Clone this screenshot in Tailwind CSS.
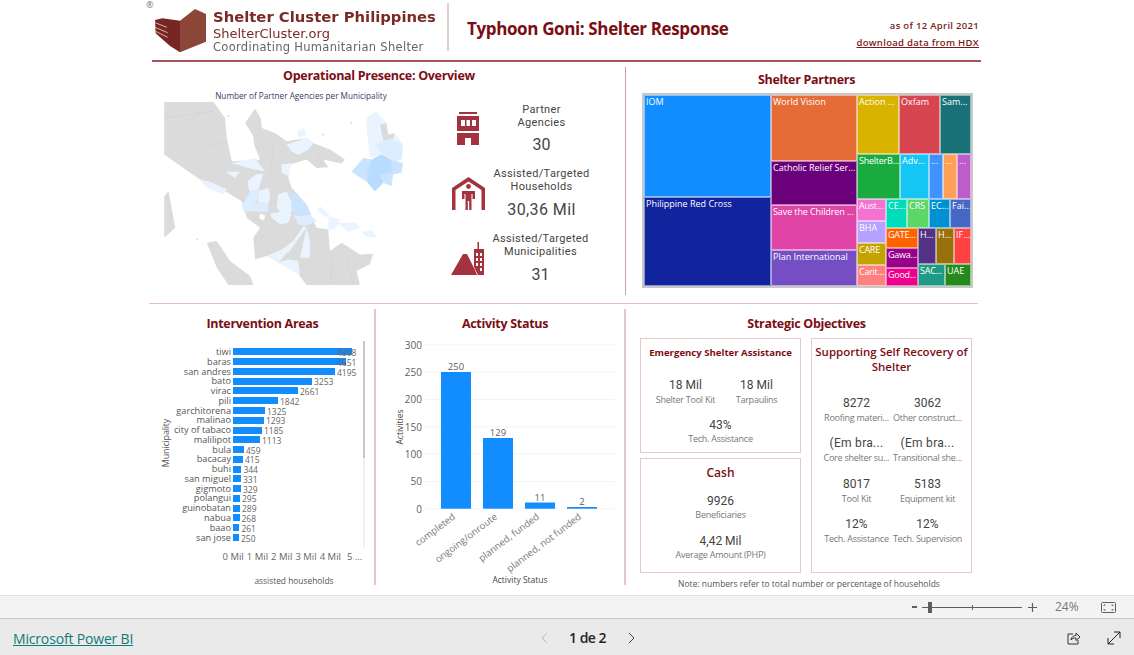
<!DOCTYPE html>
<html lang="en">
<head>
    <meta charset="UTF-8">
    <meta name="viewport" content="width=device-width, initial-scale=1.0">
    <title>Typhoon Goni: Shelter Response</title>
    <script src="https://cdn.jsdelivr.net/npm/@tailwindcss/browser@4"></script>
</head>
<body class="bg-white flex flex-col h-screen w-[1134px] overflow-hidden font-['Open_Sans',sans-serif]">
    <!-- report canvas -->
    <main class="h-[595px] shrink-0">
        <div class="w-[840px] ml-[146px]">
            <!-- header -->
            <header class="relative flex h-[60px]">
                <span class="absolute left-[0px] top-[-1px] text-[9px] leading-[12px] text-gray-500">®</span>
                <svg class="ml-[9px] mt-[9px] w-[51px] h-[44px] shrink-0 blur-[0.3px]" viewBox="30 27 153 132">
                    <path d="M105 62 L150 27 L183 42 L183 125 L105 157 Z" fill="#8c4638"/>
                    <path d="M30 60 L52 55 L105 62 L105 157 L75 138 L32 100 Z" fill="#772624"/>
                    <path d="M30 68 L66 82 M30 82 L68 98 M32 94 L68 112" stroke="#e8cfc8" stroke-width="2.5" fill="none"/>
                </svg>
                <div class="ml-[7px] w-[230px] font-['DejaVu_Sans',sans-serif] shrink-0 blur-[0.2px]">
                    <p class="mt-[8px] text-[14.8px] leading-[18px] font-bold text-[#7a2a26] whitespace-nowrap">Shelter Cluster Philippines</p>
                    <p class="text-[13px] leading-[15px] text-[#7a2a26] whitespace-nowrap">ShelterCluster.org</p>
                    <p class="-mt-[1px] text-[11.5px] leading-[14px] tracking-[0.3px] text-[#666] whitespace-nowrap">Coordinating Humanitarian Shelter</p>
                </div>
                <div class="ml-[4px] mt-[3px] w-[2px] h-[48px] bg-[#e3cccc] shrink-0"></div>
                <h1 class="ml-[18px] mt-[17px] w-[330px] text-[17px] leading-[24px] font-bold tracking-[-0.37px] text-[#7b0e14] whitespace-nowrap">Typhoon Goni: Shelter Response</h1>
                <div class="w-[182px] mt-[19px] text-right text-[9.5px] font-semibold tracking-[0.3px] text-[#7b1a1a] whitespace-nowrap">
                    <p class="leading-[14px]">as of 12 April 2021</p>
                    <p class="mt-[3px] leading-[14px] underline">download data from HDX</p>
                </div>
            </header>
            <div class="ml-[6px] w-[829px] h-[2px] bg-[#ab5258]"></div>

            <!-- top row -->
            <section class="flex mt-[5px] h-[228px]">
                <div class="w-[480px] border-r border-r-[#c9a0a3] shrink-0">
                    <h2 class="mt-[1px] text-center w-[466px] text-[12.5px] leading-[16px] font-bold tracking-[-0.3px] text-[#7b0e14]">Operational Presence: Overview</h2>
                    <div class="flex">
                        <div class="ml-[14px] w-[250px] shrink-0">
                            <p class="mt-[7px] h-[10px] pl-[32px] text-center text-[8.2px] leading-[10px] text-[#403a66] whitespace-nowrap">Number of Partner Agencies per Municipality</p>
                            <svg class="mt-[1px] w-[250px] h-[183px] blur-[0.4px]" viewBox="0 22 750 550">
                                <g fill="#dcdbdb">
                                    <path d="M12 22 L160 22 L195 70 L200 130 L215 200 L300 195 L282 150 L280 125 L255 85 L285 42 L302 70 L305 100 L345 115 L380 140 L440 130 L460 145 L510 165 L555 195 L545 207 L490 195 L505 218 L470 220 L440 195 L390 210 L385 250 L395 280 L440 330 L470 400 L505 405 L510 470 L545 445 L600 480 L640 478 L630 510 L590 530 L600 572 L440 572 L415 540 L370 510 L320 485 L285 495 L280 430 L300 400 L260 370 L245 320 L195 290 L120 255 L90 235 L12 180 Z"/>
                                    <path d="M12 305 L25 290 L45 400 L12 430 Z"/>
                                    <path d="M140 445 L170 440 L210 500 L270 545 L280 572 L205 572 L170 520 Z"/>
                                    <path d="M660 90 L680 85 L685 120 L705 115 L700 140 L670 140 Z"/>
                                    <circle cx="205" cy="65" r="3"/><circle cx="490" cy="120" r="3"/><circle cx="110" cy="435" r="3"/><circle cx="575" cy="85" r="3"/>
                                </g>
                                <path d="M12 70 L160 50 M60 120 L140 30 M90 180 L190 140 M150 190 L200 240 M340 150 L330 260 M470 170 L490 215 M300 430 L370 380 M520 480 L510 570 M560 490 L580 570" stroke="#d2d1d1" stroke-width="2" fill="none"/>
                                <path d="M300 358 L315 362 L312 378 L298 372 Z" fill="#fff"/>
                                <g fill="#eaf4ff">
                                    <path d="M620 70 L650 50 L680 85 L660 90 L670 140 L700 140 L705 115 L730 150 L725 195 L700 205 L670 180 L630 190 L620 100 Z"/>
                                    <path d="M380 150 L440 130 L460 145 L445 165 L415 182 L395 170 Z"/>
                                    <path d="M412 110 L430 100 L440 120 L415 130 Z"/>
                                    <path d="M215 205 L285 190 L315 230 L270 222 Z"/>
                                    <path d="M195 232 L240 232 L225 250 Z"/>
                                    <path d="M365 210 L395 205 L385 245 L365 235 Z"/>
                                    <path d="M262 260 L290 238 L310 238 L295 285 L268 290 Z"/>
                                    <path d="M118 255 L150 262 L200 285 L190 300 L140 280 Z"/>
                                    <path d="M295 290 L325 280 L330 310 L325 325 L295 325 Z"/>
                                    <path d="M355 300 L380 290 L395 325 L395 355 L365 358 L350 340 Z"/>
                                    <path d="M330 358 L360 352 L395 358 L385 385 L360 390 L335 370 Z"/>
                                    <path d="M480 335 L510 360 L495 370 L472 345 Z"/>
                                    <path d="M505 365 L540 375 L525 405 L505 405 Z"/>
                                    <path d="M530 385 L590 385 L600 400 L565 412 Z"/>
                                    <path d="M605 412 L640 408 L650 430 L615 425 Z"/>
                                    <path d="M430 395 L400 440 L365 465 L385 475 L440 400 Z"/>
                                    <path d="M365 465 L320 485 L355 505 L385 470 Z"/>
                                    <path d="M440 400 L450 440 L450 490 L420 490 Z"/>
                                    <path d="M350 505 L385 495 L415 500 L420 545 L375 515 Z"/>
                                </g>
                                <g fill="#dcedff">
                                    <path d="M245 335 L270 290 L300 285 L290 320 L275 350 L250 352 Z"/>
                                    <path d="M275 350 L290 325 L325 325 L325 352 L290 352 Z"/>
                                    <path d="M400 360 L420 365 L450 360 L470 380 L435 395 L415 390 Z"/>
                                    <path d="M645 150 L695 130 L730 150 L725 195 L700 205 L670 180 Z"/>
                                </g>
                                <g fill="#c9e4ff">
                                    <path d="M382 290 L410 300 L445 340 L450 355 L420 365 L395 345 L395 310 Z"/>
                                    <path d="M575 232 L610 190 L635 195 L665 180 L695 197 L730 205 L725 235 L700 240 L695 275 L670 265 L645 290 L620 262 Z"/>
                                </g>
                                <g fill="#b8dcff">
                                    <path d="M635 195 L665 180 L695 197 L695 235 L650 240 L625 225 Z"/>
                                    <path d="M622 228 L660 240 L670 265 L645 290 L625 265 Z"/>
                                </g>
                            </svg>
                        </div>
                        <!-- KPIs -->
                        <div class="ml-[35px] mt-[17px] w-[150px] text-[#444] font-['Roboto',sans-serif]">
                            <div class="flex h-[65px]">
                                <svg class="ml-[11px] mt-[11px] w-[25px] h-[33px] shrink-0" viewBox="0 0 25 33" fill="#a4333f">
                                    <path d="M3 0 H21 V2 H3 Z"/>
                                    <path fill-rule="evenodd" d="M1 4 H23 V19 H1 Z M5 8 V14 H9 V8 Z M10.5 8 V14 H14 V8 Z M16 8 V14 H20 V8 Z"/>
                                    <path d="M1 21 H23 V33 H15 V26 H9 V33 H1 Z"/>
                                </svg>
                                <div class="ml-[9px] w-[103px] text-center">
                                    <p class="mt-[2px] text-[11px] leading-[13px] tracking-[0.35px]">Partner<br>Agencies</p>
                                    <p class="mt-[5px] text-[16px] leading-[22px]">30</p>
                                </div>
                            </div>
                            <div class="flex h-[65px]">
                                <svg class="ml-[7px] mt-[11px] w-[33px] h-[33px] shrink-0" viewBox="0 0 33 33" fill="#a4333f">
                                    <path d="M0 11 L16.5 0 L33 11 V33 H29.5 V13 L16.5 4.5 L3.5 13 V33 H0 Z"/>
                                    <circle cx="16.5" cy="9.5" r="2.4"/>
                                    <path d="M10 14 H23 V22 H20.5 V17 H19.5 V33 H17.2 V24 H15.8 V33 H13.5 V17 H12.5 V22 H10 Z"/>
                                </svg>
                                <div class="ml-[5px] w-[103px] text-center">
                                    <p class="mt-[1px] text-[11px] leading-[13px] tracking-[0.35px] whitespace-nowrap">Assisted/Targeted<br>Households</p>
                                    <p class="mt-[6px] text-[16px] leading-[22px] tracking-[0.4px]">30,36 Mil</p>
                                </div>
                            </div>
                            <div class="flex h-[65px]">
                                <svg class="ml-[6px] mt-[11px] w-[34px] h-[33px] shrink-0" viewBox="0 0 34 33" fill="#a4333f">
                                    <path d="M0 33 L12 12 L16 12 L24 28 L26 33 Z"/>
                                    <path fill-rule="evenodd" d="M26.5 0 H28 V7 H33 V33 H27 L23 25 V7 H26.5 Z M25 11 V14 H27 V11 Z M29 11 V14 H31 V11 Z M25 16 V19 H27 V16 Z M29 16 V19 H31 V16 Z M25 21 V24 H27 V21 Z M29 21 V24 H31 V21 Z M29 26 V29 H31 V26 Z"/>
                                </svg>
                                <div class="ml-[4px] w-[103px] text-center">
                                    <p class="mt-[1px] text-[11px] leading-[13px] tracking-[0.35px] whitespace-nowrap">Assisted/Targeted<br>Municipalities</p>
                                    <p class="mt-[6px] text-[16px] leading-[22px]">31</p>
                                </div>
                            </div>
                        </div>
                    </div>
                </div>

                <!-- treemap -->
                <div class="pl-[16px]">
                    <h2 class="mt-[5px] w-[329px] text-center text-[12.5px] leading-[16px] font-bold tracking-[-0.3px] text-[#7b0e14]">Shelter Partners</h2>
                    <div class="mt-[5px] flex w-[331px] h-[195px] border-2 border-[#c8c8c8] text-[9px] leading-[12px] text-white whitespace-nowrap overflow-hidden">
                        <div class="flex flex-col w-[127px] shrink-0">
                            <div class="h-[102px] px-[1px] bg-[#118dff] border border-white/50">IOM</div>
                            <div class="flex-1 px-[1px] bg-[#12239e] border border-white/50">Philippine Red Cross</div>
                        </div>
                        <div class="flex flex-col w-[86px] shrink-0">
                            <div class="h-[66px] px-[1px] bg-[#e66c37] border border-white/50">World Vision</div>
                            <div class="h-[44px] px-[1px] bg-[#6b007b] border border-white/50 overflow-hidden">Catholic Relief Ser...</div>
                            <div class="h-[45px] px-[1px] bg-[#e044a7] border border-white/50 overflow-hidden tracking-[-0.1px]">Save the Children ...</div>
                            <div class="flex-1 px-[1px] bg-[#744ec2] border border-white/50">Plan International</div>
                        </div>
                        <div class="flex flex-col w-[114px] shrink-0">
                            <div class="flex h-[59px]">
                                <div class="w-[42px] shrink-0 overflow-hidden px-[1px] bg-[#d9b300] border border-white/50">Action ...</div>
                                <div class="w-[41px] shrink-0 overflow-hidden px-[1px] bg-[#d64550] border border-white/50">Oxfam</div>
                                <div class="w-[31px] shrink-0 overflow-hidden px-[1px] bg-[#197278] border border-white/50">Sam...</div>
                            </div>
                            <div class="flex h-[45px]">
                                <div class="w-[43px] shrink-0 overflow-hidden px-[1px] tracking-[-0.25px] bg-[#1aab40] border border-white/50">ShelterB...</div>
                                <div class="w-[29px] shrink-0 overflow-hidden px-[1px] bg-[#15c6f4] border border-white/50">Adv...</div>
                                <div class="w-[14px] shrink-0 overflow-hidden px-[1px] bg-[#4092ff] border border-white/50">...</div>
                                <div class="w-[14px] shrink-0 overflow-hidden px-[1px] bg-[#ffa058] border border-white/50">...</div>
                                <div class="w-[14px] shrink-0 overflow-hidden px-[1px] bg-[#be5dc9] border border-white/50">...</div>
                            </div>
                            <div class="flex flex-1">
                                <div class="flex flex-col w-[29px] shrink-0">
                                    <div class="h-[22px] overflow-hidden px-[1px] tracking-[-0.25px] bg-[#f472d0] border border-white/50">Aust...</div>
                                    <div class="h-[22px] overflow-hidden px-[1px] bg-[#b5a1ff] border border-white/50">BHA</div>
                                    <div class="h-[22px] overflow-hidden px-[1px] tracking-[-0.25px] bg-[#c4a200] border border-white/50">CARE</div>
                                    <div class="flex-1 overflow-hidden px-[1px] tracking-[-0.25px] bg-[#ff8080] border border-white/50">Carit...</div>
                                </div>
                                <div class="flex flex-col w-[85px] shrink-0">
                                    <div class="flex h-[29px]">
                                        <div class="w-[21px] shrink-0 overflow-hidden px-[1px] bg-[#00dbbc] border border-white/50">CE...</div>
                                        <div class="w-[22px] shrink-0 overflow-hidden px-[1px] bg-[#5bd667] border border-white/50">CRS</div>
                                        <div class="w-[21px] shrink-0 overflow-hidden px-[1px] bg-[#0091d5] border border-white/50">EC...</div>
                                        <div class="w-[21px] shrink-0 overflow-hidden px-[1px] bg-[#4668c5] border border-white/50">Fai...</div>
                                    </div>
                                    <div class="flex flex-1">
                                        <div class="flex flex-col w-[32px] shrink-0">
                                            <div class="h-[20px] overflow-hidden px-[1px] tracking-[-0.25px] bg-[#ff6300] border border-white/50">GATE...</div>
                                            <div class="h-[20px] overflow-hidden px-[1px] tracking-[-0.25px] bg-[#99008a] border border-white/50">Gawa...</div>
                                            <div class="flex-1 overflow-hidden px-[1px] tracking-[-0.25px] bg-[#ec008c] border border-white/50">Good...</div>
                                        </div>
                                        <div class="flex flex-col w-[53px] shrink-0">
                                            <div class="flex h-[36px]">
                                                <div class="w-[18px] shrink-0 overflow-hidden px-[1px] bg-[#533285] border border-white/50">H...</div>
                                                <div class="w-[18px] shrink-0 overflow-hidden px-[1px] bg-[#99700a] border border-white/50">H...</div>
                                                <div class="w-[17px] shrink-0 overflow-hidden px-[1px] bg-[#ff4141] border border-white/50">IF...</div>
                                            </div>
                                            <div class="flex flex-1">
                                                <div class="w-[27px] shrink-0 overflow-hidden px-[1px] tracking-[-0.25px] bg-[#1f9a85] border border-white/50">SAC...</div>
                                                <div class="w-[26px] shrink-0 overflow-hidden px-[1px] bg-[#25891c] border border-white/50">UAE</div>
                                            </div>
                                        </div>
                                    </div>
                                </div>
                            </div>
                        </div>
                    </div>
                </div>
            </section>

            <div class="mt-[8px] ml-[3px] w-[829px] h-[1px] bg-[#e3bfc1]"></div>

            <!-- bottom row -->
            <section class="flex mt-[5px] h-[276px]">
                <!-- intervention areas -->
                <div class="relative w-[230px] border-r-2 border-r-[#e6c5c8] shrink-0 text-[#555]">
                    <h2 class="mt-[7px] pl-[3px] text-center w-[230px] text-[12.5px] leading-[16px] font-bold tracking-[-0.3px] text-[#7b0e14]">Intervention Areas</h2>
                    <span class="absolute left-[-4px] top-[129px] -rotate-90 text-[9px] leading-[10px] tracking-[-0.2px]">Municipality</span>
                    <div class="absolute left-[217px] top-[32px] w-[2px] h-[207px] bg-[#f0f0f0]">
                        <div class="w-[2px] h-[117px] bg-[#c8c8c8]"></div>
                    </div>
                    <div class="mt-[15px] text-[9.2px] leading-[9.77px] whitespace-nowrap">
                        <div class="flex items-center h-[9.77px]"><span class="w-[85px] text-right">tiwi</span><div class="ml-[2px] h-[7px] w-[119px] bg-[#118dff]"></div><span class="-ml-[15px] mt-[2px] text-[8.5px] text-[#666]">4898</span></div>
                        <div class="flex items-center h-[9.77px]"><span class="w-[85px] text-right">baras</span><div class="ml-[2px] h-[7px] w-[113px] bg-[#118dff]"></div><span class="-ml-[9px] mt-[2px] text-[8.5px] text-[#666]">4651</span></div>
                        <div class="flex items-center h-[9.77px]"><span class="w-[85px] text-right">san andres</span><div class="ml-[2px] h-[7px] w-[102px] bg-[#118dff]"></div><span class="ml-[2px] mt-[2px] text-[8.5px] text-[#666]">4195</span></div>
                        <div class="flex items-center h-[9.77px]"><span class="w-[85px] text-right">bato</span><div class="ml-[2px] h-[7px] w-[79px] bg-[#118dff]"></div><span class="ml-[2px] mt-[2px] text-[8.5px] text-[#666]">3253</span></div>
                        <div class="flex items-center h-[9.77px]"><span class="w-[85px] text-right">virac</span><div class="ml-[2px] h-[7px] w-[65px] bg-[#118dff]"></div><span class="ml-[2px] mt-[2px] text-[8.5px] text-[#666]">2661</span></div>
                        <div class="flex items-center h-[9.77px]"><span class="w-[85px] text-right">pili</span><div class="ml-[2px] h-[7px] w-[45px] bg-[#118dff]"></div><span class="ml-[2px] mt-[2px] text-[8.5px] text-[#666]">1842</span></div>
                        <div class="flex items-center h-[9.77px]"><span class="w-[85px] text-right">garchitorena</span><div class="ml-[2px] h-[7px] w-[32px] bg-[#118dff]"></div><span class="ml-[2px] mt-[2px] text-[8.5px] text-[#666]">1325</span></div>
                        <div class="flex items-center h-[9.77px]"><span class="w-[85px] text-right">malinao</span><div class="ml-[2px] h-[7px] w-[31px] bg-[#118dff]"></div><span class="ml-[2px] mt-[2px] text-[8.5px] text-[#666]">1293</span></div>
                        <div class="flex items-center h-[9.77px]"><span class="w-[85px] text-right">city of tabaco</span><div class="ml-[2px] h-[7px] w-[29px] bg-[#118dff]"></div><span class="ml-[2px] mt-[2px] text-[8.5px] text-[#666]">1185</span></div>
                        <div class="flex items-center h-[9.77px]"><span class="w-[85px] text-right">malilipot</span><div class="ml-[2px] h-[7px] w-[27px] bg-[#118dff]"></div><span class="ml-[2px] mt-[2px] text-[8.5px] text-[#666]">1113</span></div>
                        <div class="flex items-center h-[9.77px]"><span class="w-[85px] text-right">bula</span><div class="ml-[2px] h-[7px] w-[11px] bg-[#118dff]"></div><span class="ml-[2px] mt-[2px] text-[8.5px] text-[#666]">459</span></div>
                        <div class="flex items-center h-[9.77px]"><span class="w-[85px] text-right">bacacay</span><div class="ml-[2px] h-[7px] w-[10px] bg-[#118dff]"></div><span class="ml-[2px] mt-[2px] text-[8.5px] text-[#666]">415</span></div>
                        <div class="flex items-center h-[9.77px]"><span class="w-[85px] text-right">buhi</span><div class="ml-[2px] h-[7px] w-[8.4px] bg-[#118dff]"></div><span class="ml-[2px] mt-[2px] text-[8.5px] text-[#666]">344</span></div>
                        <div class="flex items-center h-[9.77px]"><span class="w-[85px] text-right">san miguel</span><div class="ml-[2px] h-[7px] w-[8px] bg-[#118dff]"></div><span class="ml-[2px] mt-[2px] text-[8.5px] text-[#666]">331</span></div>
                        <div class="flex items-center h-[9.77px]"><span class="w-[85px] text-right">gigmoto</span><div class="ml-[2px] h-[7px] w-[8px] bg-[#118dff]"></div><span class="ml-[2px] mt-[2px] text-[8.5px] text-[#666]">329</span></div>
                        <div class="flex items-center h-[9.77px]"><span class="w-[85px] text-right">polangui</span><div class="ml-[2px] h-[7px] w-[7px] bg-[#118dff]"></div><span class="ml-[2px] mt-[2px] text-[8.5px] text-[#666]">295</span></div>
                        <div class="flex items-center h-[9.77px]"><span class="w-[85px] text-right">guinobatan</span><div class="ml-[2px] h-[7px] w-[7px] bg-[#118dff]"></div><span class="ml-[2px] mt-[2px] text-[8.5px] text-[#666]">289</span></div>
                        <div class="flex items-center h-[9.77px]"><span class="w-[85px] text-right">nabua</span><div class="ml-[2px] h-[7px] w-[6.5px] bg-[#118dff]"></div><span class="ml-[2px] mt-[2px] text-[8.5px] text-[#666]">268</span></div>
                        <div class="flex items-center h-[9.77px]"><span class="w-[85px] text-right">baao</span><div class="ml-[2px] h-[7px] w-[6.4px] bg-[#118dff]"></div><span class="ml-[2px] mt-[2px] text-[8.5px] text-[#666]">261</span></div>
                        <div class="flex items-center h-[9.77px]"><span class="w-[85px] text-right">san jose</span><div class="ml-[2px] h-[7px] w-[6px] bg-[#118dff]"></div><span class="ml-[2px] mt-[2px] text-[8.5px] text-[#666]">250</span></div>
                    </div>
                    <div class="flex mt-[8px] ml-[75px] text-[9.5px] leading-[13px] text-[#666] whitespace-nowrap">
                        <span class="w-[24.3px] flex justify-center">0 Mil</span>
                        <span class="w-[24.3px] flex justify-center">1 Mil</span>
                        <span class="w-[24.3px] flex justify-center">2 Mil</span>
                        <span class="w-[24.3px] flex justify-center">3 Mil</span>
                        <span class="w-[24.3px] flex justify-center">4 Mil</span>
                        <span class="w-[24.3px] flex justify-center">5 ...</span>
                    </div>
                    <p class="mt-[13px] w-[296px] text-center text-[8.4px] leading-[10px] whitespace-nowrap">assisted households</p>
                </div>

                <!-- activity status -->
                <div class="w-[250px] border-r-2 border-r-[#e6c5c8] shrink-0">
                    <h2 class="mt-[7px] pl-[10px] text-center text-[12.5px] leading-[16px] font-bold tracking-[-0.3px] text-[#7b0e14]">Activity Status</h2>
                    <svg class="mt-[3px] w-[248px] h-[250px]" viewBox="376 335 248 250">
                        <path d="M425 344.7 H615 M425 372 H615 M425 399.4 H615 M425 426.7 H615 M425 454 H615 M425 481.4 H615 M425 508.7 H615" stroke="#f4f4f4" stroke-width="1" fill="none"/>
                        <g fill="#118dff">
                            <rect x="441" y="372" width="30" height="136.7"/>
                            <rect x="483" y="438" width="30" height="70.7"/>
                            <rect x="525" y="502.5" width="30" height="6.2"/>
                            <rect x="567" y="507" width="30" height="1.7"/>
                        </g>
                        <g class="fill-[#605e5c] text-[10px]" text-anchor="end">
                            <text x="422" y="348.5">300</text>
                            <text x="422" y="376">250</text>
                            <text x="422" y="403">200</text>
                            <text x="422" y="430.5">150</text>
                            <text x="422" y="458">100</text>
                            <text x="422" y="485">50</text>
                            <text x="422" y="512.5">0</text>
                        </g>
                        <g class="fill-[#605e5c] text-[9.5px]" text-anchor="middle">
                            <text x="456" y="370">250</text>
                            <text x="498" y="436">129</text>
                            <text x="540" y="501">11</text>
                            <text x="582" y="505">2</text>
                        </g>
                        <g class="fill-[#777] text-[9.5px]" text-anchor="end">
                            <text transform="rotate(-37 456 518)" x="456" y="518">completed</text>
                            <text transform="rotate(-37 498 518)" x="498" y="518">ongoing/onroute</text>
                            <text transform="rotate(-37 540 518)" x="540" y="518">planned, funded</text>
                            <text transform="rotate(-37 582 518)" x="582" y="518">planned, not funded</text>
                        </g>
                        <text x="520" y="583" text-anchor="middle" class="fill-[#444] text-[8.5px]">Activity Status</text>
                        <text transform="rotate(-90 403 427)" x="403" y="427" text-anchor="middle" class="fill-[#444] text-[8.5px]">Activities</text>
                    </svg>
                </div>

                <!-- strategic objectives -->
                <div class="pl-[14px]">
                    <h2 class="mt-[7px] w-[332px] pl-[1px] text-center text-[12.5px] leading-[16px] font-bold tracking-[-0.3px] text-[#7b0e14]">Strategic Objectives</h2>
                    <div class="flex gap-[10px] mt-[6px] h-[235px]">
                        <div class="flex flex-col gap-[5px] w-[161px]">
                            <div class="h-[115px] border border-[#e6c8cc] text-center">
                                <h3 class="mt-[7px] text-[9.6px] leading-[13px] font-bold text-[#7b0e14] whitespace-nowrap">Emergency Shelter Assistance</h3>
                                <div class="grid grid-cols-[71px_71px] mt-[19px] px-[9px] whitespace-nowrap">
                                    <div><p class="text-[12px] leading-[15px] font-['Roboto',sans-serif] text-[#444]">18 Mil</p><p class="text-[9px] leading-[14px] tracking-[-0.25px] text-[#777]">Shelter Tool Kit</p></div>
                                    <div><p class="text-[12px] leading-[15px] font-['Roboto',sans-serif] text-[#444]">18 Mil</p><p class="text-[9px] leading-[14px] tracking-[-0.25px] text-[#777]">Tarpaulins</p></div>
                                </div>
                                <p class="mt-[11px] text-[12px] leading-[15px] font-['Roboto',sans-serif] text-[#444]">43%</p>
                                <p class="-mt-[1px] text-[9px] leading-[14px] tracking-[-0.25px] text-[#777]">Tech. Assistance</p>
                            </div>
                            <div class="flex-1 border border-[#e6c8cc] text-center">
                                <h3 class="mt-[6px] text-[12px] leading-[16px] font-semibold text-[#7b0e14]">Cash</h3>
                                <p class="mt-[13px] text-[12px] leading-[15px] font-['Roboto',sans-serif] text-[#444]">9926</p>
                                <p class="-mt-[1px] text-[9px] leading-[14px] tracking-[-0.25px] text-[#777]">Beneficiaries</p>
                                <p class="mt-[12px] text-[12px] leading-[15px] font-['Roboto',sans-serif] text-[#444]">4,42 Mil</p>
                                <p class="-mt-[1px] text-[9px] leading-[14px] tracking-[-0.25px] text-[#777]">Average Amount (PHP)</p>
                            </div>
                        </div>
                        <div class="w-[161px] border border-[#e6c8cc] text-center">
                            <h3 class="mt-[5px] text-[11.5px] leading-[15px] font-semibold text-[#7b0e14]">Supporting Self Recovery of Shelter</h3>
                            <div class="grid grid-cols-[71px_71px] mt-[21.5px] px-[9px] gap-y-[11.5px] whitespace-nowrap">
                                <div><p class="text-[12px] leading-[15px] font-['Roboto',sans-serif] text-[#444]">8272</p><p class="text-[9px] leading-[14px] tracking-[-0.25px] text-[#777]">Roofing materi...</p></div>
                                <div><p class="text-[12px] leading-[15px] font-['Roboto',sans-serif] text-[#444]">3062</p><p class="text-[9px] leading-[14px] tracking-[-0.25px] text-[#777]">Other construct...</p></div>
                                <div><p class="text-[12px] leading-[15px] tracking-[0.3px] font-['Roboto',sans-serif] text-[#444]">(Em bra...</p><p class="text-[9px] leading-[14px] tracking-[-0.25px] text-[#777]">Core shelter su...</p></div>
                                <div><p class="text-[12px] leading-[15px] tracking-[0.3px] font-['Roboto',sans-serif] text-[#444]">(Em bra...</p><p class="text-[9px] leading-[14px] tracking-[-0.25px] text-[#777]">Transitional she...</p></div>
                                <div><p class="text-[12px] leading-[15px] font-['Roboto',sans-serif] text-[#444]">8017</p><p class="text-[9px] leading-[14px] tracking-[-0.25px] text-[#777]">Tool Kit</p></div>
                                <div><p class="text-[12px] leading-[15px] font-['Roboto',sans-serif] text-[#444]">5183</p><p class="text-[9px] leading-[14px] tracking-[-0.25px] text-[#777]">Equipment kit</p></div>
                                <div><p class="text-[12px] leading-[15px] font-['Roboto',sans-serif] text-[#444]">12%</p><p class="text-[9px] leading-[14px] tracking-[-0.25px] text-[#777]">Tech. Assistance</p></div>
                                <div><p class="text-[12px] leading-[15px] font-['Roboto',sans-serif] text-[#444]">12%</p><p class="text-[9px] leading-[14px] tracking-[-0.25px] text-[#777]">Tech. Supervision</p></div>
                            </div>
                        </div>
                    </div>
                    <p class="mt-[5px] w-[338px] text-center text-[8.5px] leading-[11px] text-[#555] whitespace-nowrap">Note: numbers refer to total number or percentage of households</p>
                </div>
            </section>
        </div>
    </main>

    <!-- zoom bar -->
    <div class="flex items-center h-[24px] shrink-0 bg-[#f3f3f3] border-t border-t-[#e0e0e0] border-b border-b-[#c8c8c8] text-[#605e5c]">
        <span class="ml-[912px] w-[5px] h-[2px] bg-[#605e5c]"></span>
        <div class="relative ml-[5px] w-[100px] h-[1px] bg-[#605e5c]">
            <span class="absolute left-[6px] top-[-5px] w-[4px] h-[11px] bg-[#605e5c]"></span>
            <span class="absolute left-[50px] top-[-2px] w-[1px] h-[5px] bg-[#605e5c]"></span>
        </div>
        <svg class="ml-[6px] w-[9px] h-[9px]" viewBox="0 0 9 9"><path d="M0 4.5 H9 M4.5 0 V9" stroke="#605e5c" stroke-width="1.2"/></svg>
        <span class="ml-[18px] text-[12px] leading-[16px] text-[#777]">24%</span>
        <svg class="ml-[22px] w-[15px] h-[11px]" viewBox="0 0 15 11" fill="none" stroke="#605e5c"><rect x="0.5" y="0.5" width="14" height="10" rx="1"/><path d="M3 4 V3 H4.5 M10.5 3 H12 V4 M3 7 V8 H4.5 M10.5 8 H12 V7"/></svg>
    </div>

    <!-- footer -->
    <footer class="flex items-center flex-1 pt-[2px] bg-[#eaeaea]">
        <a href="#" class="ml-[13px] mt-[1px] w-[130px] text-[14px] leading-[20px] tracking-[-0.17px] text-[#117a7a] underline whitespace-nowrap">Microsoft Power BI</a>
        <svg class="ml-[398px] w-[7px] h-[12px]" viewBox="0 0 7 12" fill="none" stroke="#b5b5b5"><path d="M6 1 L1 6 L6 11"/></svg>
        <span class="ml-[21px] text-[14px] leading-[20px] font-semibold tracking-[-0.5px] text-[#252423] whitespace-nowrap w-[38px]">1 de 2</span>
        <svg class="ml-[21px] w-[7px] h-[12px]" viewBox="0 0 7 12" fill="none" stroke="#444"><path d="M1 1 L6 6 L1 11"/></svg>
        <svg class="ml-[432px] w-[14px] h-[14px]" viewBox="0 0 14 14" fill="none" stroke="#333"><path d="M6 3 H1 V13 H11 V9"/><path d="M4 9 C4 6 7 4.5 9 4.5 V2 L13 6 L9 9.5 V7 C7 7 5 7.5 4 9 Z"/></svg>
        <svg class="ml-[26px] w-[14px] h-[14px]" viewBox="0 0 14 14" fill="none" stroke="#222"><path d="M1 13 L13 1 M7 1 H13 V7 M1 7 V13 H7"/></svg>
    </footer>
</body>
</html>
